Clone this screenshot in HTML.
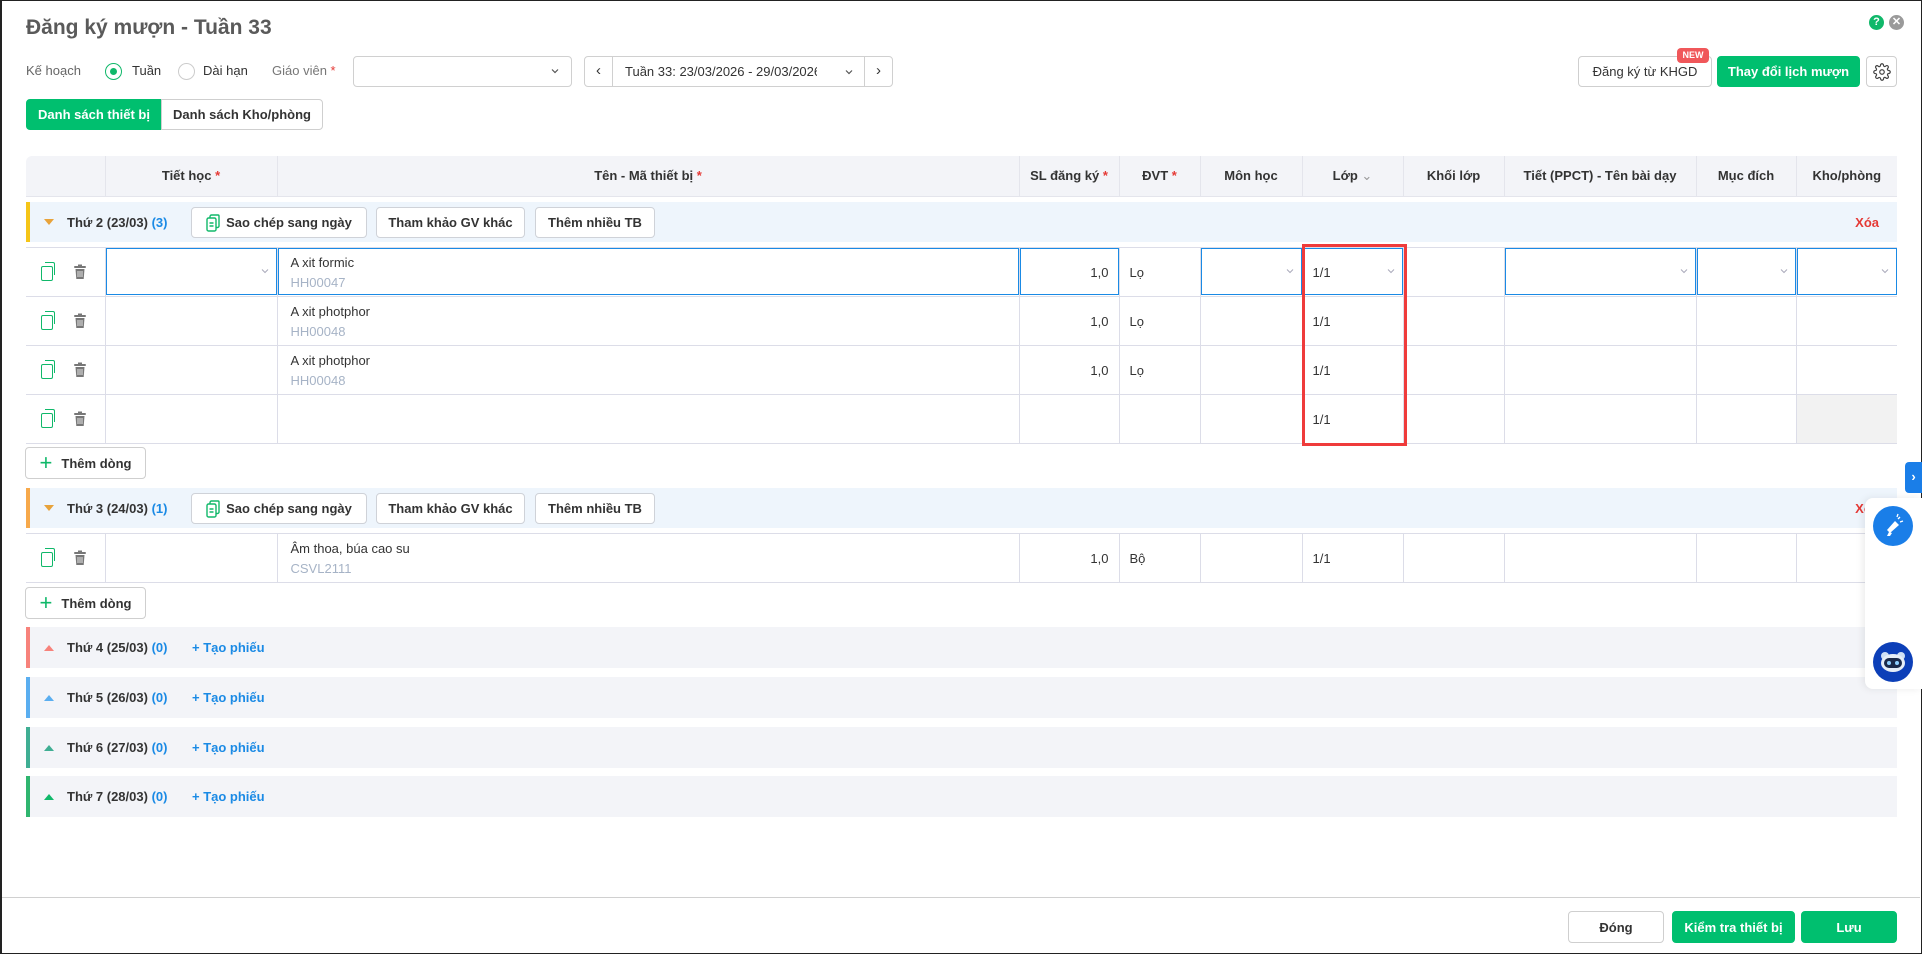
<!DOCTYPE html>
<html><head><meta charset="utf-8"><style>
*{box-sizing:border-box;margin:0;padding:0}
body{width:1922px;height:954px;overflow:hidden;background:#fff;font-family:"Liberation Sans",sans-serif;font-size:13px;color:#333;position:relative}
.frame{position:absolute;left:0;top:0;width:1922px;height:954px;border:1px solid #222;border-left-width:2px}
.abs{position:absolute}
.btn{position:absolute;border:1px solid #cfcfcf;border-radius:4px;background:#fff;display:flex;align-items:center;justify-content:center;font-size:13px;color:#333}
.g{background:#00bf6f;border-color:#00bf6f;color:#fff;font-weight:bold}
table{position:absolute;left:26px;border-collapse:collapse;table-layout:fixed;width:1871px}
td,th{border:1px solid #dcdde8;border-top:none;padding:0 10px;vertical-align:middle}
td:first-child,th:first-child{border-left:none}
td:last-child,th:last-child{border-right:none}
th{background:#f3f4f8;height:40px;font-weight:bold;font-size:13px;color:#333;border-color:#e4e5ec}
th:first-child{border-top-left-radius:6px}
td{height:49px;position:relative}
.req{color:#e53935}
.inp{position:absolute;left:0;top:0;right:0;bottom:1px;border:1px solid #1a8ae5;}
.chev{position:absolute;right:8px;top:50%;margin-top:-5px;width:8px;height:8px}
.nm{font-size:13px;color:#333;position:absolute;left:13px;top:7px}
.cd{font-size:13px;color:#a6b3c6;position:absolute;left:13px;top:27px}
.grp{position:absolute;left:26px;width:1871px;display:flex;align-items:center;font-size:13px;font-weight:bold;color:#333}
.bar{position:absolute;left:0;top:0;bottom:0;width:4px}
.tri{width:0;height:0;border-left:5px solid transparent;border-right:5px solid transparent;position:absolute;left:18px}
.gbtn{position:absolute;top:5px;height:31px;border:1px solid #cfd2d8;border-radius:4px;background:#fff;font-weight:bold;font-size:13px;display:flex;align-items:center;justify-content:center;color:#333}
.blue{color:#1a8ae5}
td.ic::before{content:"";position:absolute;left:15px;top:18px;width:10px;height:13px;border:1.5px solid #10b86a;border-radius:2px}
td.ic::after{content:"";position:absolute;left:19px;top:14px;width:9px;height:12px;border:1.5px solid #10b86a;border-left:none;border-bottom:none;border-radius:0 2px 0 0}
.tr{position:absolute;width:14px;height:16px}
</style></head><body>
<div class="frame"></div>
<div class="abs" style="left:26px;top:16px;font-size:21px;font-weight:bold;color:#5a5a5a">Đăng ký mượn - Tuần 33</div>
<div class="abs" style="left:1869px;top:15px;width:15px;height:15px;border-radius:50%;background:#10b86a;color:#fff;font-size:11px;font-weight:bold;text-align:center;line-height:15px">?</div>
<div class="abs" style="left:1889px;top:15px;width:15px;height:15px;border-radius:50%;background:#9a9a9a;color:#fff;font-size:11px;font-weight:bold;text-align:center;line-height:15px">✕</div>

<div class="abs" style="left:26px;top:63px;color:#666">Kế hoạch</div>
<div class="abs" style="left:105px;top:63px;width:17px;height:17px;border:1px solid #10b86a;border-radius:50%"><div style="margin:4px;width:7px;height:7px;border-radius:50%;background:#10b86a"></div></div>
<div class="abs" style="left:132px;top:63px;color:#333">Tuần</div>
<div class="abs" style="left:178px;top:63px;width:17px;height:17px;border:1px solid #ccc;border-radius:50%"></div>
<div class="abs" style="left:203px;top:63px;color:#333">Dài hạn</div>
<div class="abs" style="left:272px;top:63px;color:#777">Giáo viên <span class="req">*</span></div>
<div class="abs" style="left:353px;top:56px;width:219px;height:31px;border:1px solid #d0d0d0;border-radius:4px"><svg class="chev" style="right:12px" viewBox="0 0 8 8"><path d="M1 2.5L4 5.5L7 2.5" stroke="#555" fill="none" stroke-width="1.2"/></svg></div>
<div class="abs" style="left:584px;top:56px;width:309px;height:31px;border:1px solid #d0d0d0;border-radius:4px;overflow:hidden">
 <div class="abs" style="left:0;top:0;width:28px;height:29px;border-right:1px solid #d0d0d0;text-align:center;line-height:28px;font-size:15px">‹</div>
 <div class="abs" style="left:40px;top:7px;width:192px;overflow:hidden;white-space:nowrap">Tuần 33: 23/03/2026 - 29/03/2026</div>
 <svg class="abs" style="left:260px;top:11px;width:8px;height:8px" viewBox="0 0 8 8"><path d="M1 2.5L4 5.5L7 2.5" stroke="#555" fill="none" stroke-width="1.2"/></svg>
 <div class="abs" style="right:0;top:0;width:28px;height:29px;border-left:1px solid #d0d0d0;text-align:center;line-height:28px;font-size:15px">›</div>
</div>
<div class="btn" style="left:1578px;top:56px;width:134px;height:31px">Đăng ký từ KHGD</div>
<div class="abs" style="left:1677px;top:48px;width:32px;height:15px;background:#f0575a;border-radius:4px;color:#fff;font-size:9px;font-weight:bold;text-align:center;line-height:15px">NEW</div>
<div class="btn g" style="left:1717px;top:56px;width:143px;height:31px">Thay đổi lịch mượn</div>
<div class="btn" style="left:1866px;top:56px;width:31px;height:31px"><svg width="18" height="18" viewBox="0 0 24 24" fill="none" stroke="#444" stroke-width="1.6"><circle cx="12" cy="12" r="3"/><path d="M19.4 15a1.7 1.7 0 0 0 .3 1.8l.1.1a2 2 0 1 1-2.8 2.8l-.1-.1a1.7 1.7 0 0 0-1.8-.3 1.7 1.7 0 0 0-1 1.5V21a2 2 0 1 1-4 0v-.1a1.7 1.7 0 0 0-1.1-1.5 1.7 1.7 0 0 0-1.800.3l-.1.1a2 2 0 1 1-2.8-2.8l.1-.1a1.7 1.7 0 0 0 .3-1.8 1.7 1.7 0 0 0-1.5-1H3a2 2 0 1 1 0-4h.1a1.7 1.7 0 0 0 1.5-1.1 1.7 1.7 0 0 0-.3-1.8l-.1-.1a2 2 0 1 1 2.8-2.8l.1.1a1.7 1.7 0 0 0 1.8.3H9a1.7 1.7 0 0 0 1-1.5V3a2 2 0 1 1 4 0v.1a1.7 1.7 0 0 0 1 1.5 1.7 1.7 0 0 0 1.8-.3l.1-.1a2 2 0 1 1 2.8 2.8l-.1.1a1.7 1.7 0 0 0-.3 1.8V9a1.7 1.7 0 0 0 1.5 1H21a2 2 0 1 1 0 4h-.1a1.7 1.7 0 0 0-1.5 1z"/></svg></div>

<div class="btn g" style="left:26px;top:99px;width:136px;height:31px;border-radius:4px 0 0 4px">Danh sách thiết bị</div>
<div class="btn" style="left:161px;top:99px;width:162px;height:31px;border-radius:0 4px 4px 0;font-weight:bold">Danh sách Kho/phòng</div>

<table style="top:156px"><colgroup><col style="width:79px"><col style="width:172px"><col style="width:742px"><col style="width:100px"><col style="width:81px"><col style="width:102px"><col style="width:101px"><col style="width:101px"><col style="width:192px"><col style="width:100px"><col style="width:101px"></colgroup>
<tr><th></th><th>Tiết học <span class="req">*</span></th><th>Tên - Mã thiết bị <span class="req">*</span></th><th>SL đăng ký <span class="req">*</span></th><th>ĐVT <span class="req">*</span></th><th>Môn học</th><th>Lớp <span style="color:#999;font-weight:normal">⌄</span></th><th>Khối lớp</th><th>Tiết (PPCT) - Tên bài dạy</th><th>Mục đích</th><th>Kho/phòng</th></tr></table>

<div class="grp" style="top:202px;height:40px;background:#eef5fc"><div class="bar" style="background:#f5c518"></div><div class="tri" style="border-top:6px solid #e8a33a"></div>
<span style="position:absolute;left:41px">Thứ 2 (23/03) <span class="blue">(3)</span></span>
<div class="gbtn" style="left:165px;width:176px"><svg width="14" height="18" viewBox="0 0 14 18" style="margin-right:6px" fill="none" stroke="#10b86a" stroke-width="1.4"><rect x="1" y="4" width="9" height="13" rx="1.5"/><path d="M4 4V2.5A1.5 1.5 0 0 1 5.5 1H12a1 1 0 0 1 1 1v10a1.5 1.5 0 0 1-1.5 1.5H10"/><path d="M3.5 9h4M3.5 12h4"/></svg>Sao chép sang ngày</div>
<div class="gbtn" style="left:350px;width:149px">Tham khảo GV khác</div>
<div class="gbtn" style="left:509px;width:120px">Thêm nhiều TB</div>
<span style="position:absolute;right:18px;color:#e53935">Xóa</span></div>

<table style="top:247px;border-top:1px solid #dcdde8"><colgroup><col style="width:79px"><col style="width:172px"><col style="width:742px"><col style="width:100px"><col style="width:81px"><col style="width:102px"><col style="width:101px"><col style="width:101px"><col style="width:192px"><col style="width:100px"><col style="width:101px"></colgroup>
<tr><td class="ic"></td><td><div class="inp"></div><svg class="chev" viewBox="0 0 8 8"><path d="M1 2.5L4 5.5L7 2.5" stroke="#aab" fill="none"/></svg></td><td><div class="inp"></div><span class="nm">A xit formic</span><span class="cd">HH00047</span></td><td style="text-align:right"><div class="inp"></div><span style="position:relative">1,0</span></td><td>Lọ</td><td><div class="inp"></div><svg class="chev" viewBox="0 0 8 8"><path d="M1 2.5L4 5.5L7 2.5" stroke="#aab" fill="none"/></svg></td><td><div class="inp"></div><span style="position:relative">1/1</span><svg class="chev" viewBox="0 0 8 8"><path d="M1 2.5L4 5.5L7 2.5" stroke="#aab" fill="none"/></svg></td><td></td><td><div class="inp"></div><svg class="chev" viewBox="0 0 8 8"><path d="M1 2.5L4 5.5L7 2.5" stroke="#aab" fill="none"/></svg></td><td><div class="inp"></div><svg class="chev" viewBox="0 0 8 8"><path d="M1 2.5L4 5.5L7 2.5" stroke="#aab" fill="none"/></svg></td><td><div class="inp"></div><svg class="chev" viewBox="0 0 8 8"><path d="M1 2.5L4 5.5L7 2.5" stroke="#aab" fill="none"/></svg></td></tr>
<tr><td class="ic"></td><td></td><td><span class="nm">A xit photphor</span><span class="cd">HH00048</span></td><td style="text-align:right">1,0</td><td>Lọ</td><td></td><td>1/1</td><td></td><td></td><td></td><td></td></tr>
<tr><td class="ic"></td><td></td><td><span class="nm">A xit photphor</span><span class="cd">HH00048</span></td><td style="text-align:right">1,0</td><td>Lọ</td><td></td><td>1/1</td><td></td><td></td><td></td><td></td></tr>
<tr><td class="ic"></td><td></td><td></td><td></td><td></td><td></td><td>1/1</td><td></td><td></td><td></td><td style="background:#f2f2f2"></td></tr>
</table>
<div class="abs" style="left:1302px;top:244px;width:105px;height:202px;border:3px solid #ef3b3b"></div>

<div class="btn" style="left:25px;top:447px;width:121px;height:32px;font-weight:bold"><span style="color:#10b86a;font-size:22px;font-weight:normal;margin-right:9px;line-height:20px">+</span>Thêm dòng</div>

<div class="grp" style="top:488px;height:40px;background:#eef5fc"><div class="bar" style="background:#f7a94b"></div><div class="tri" style="border-top:6px solid #e8a33a"></div>
<span style="position:absolute;left:41px">Thứ 3 (24/03) <span class="blue">(1)</span></span>
<div class="gbtn" style="left:165px;width:176px"><svg width="14" height="18" viewBox="0 0 14 18" style="margin-right:6px" fill="none" stroke="#10b86a" stroke-width="1.4"><rect x="1" y="4" width="9" height="13" rx="1.5"/><path d="M4 4V2.5A1.5 1.5 0 0 1 5.5 1H12a1 1 0 0 1 1 1v10a1.5 1.5 0 0 1-1.5 1.5H10"/><path d="M3.5 9h4M3.5 12h4"/></svg>Sao chép sang ngày</div>
<div class="gbtn" style="left:350px;width:149px">Tham khảo GV khác</div>
<div class="gbtn" style="left:509px;width:120px">Thêm nhiều TB</div>
<span style="position:absolute;right:18px;color:#e53935">Xóa</span></div>

<table style="top:533px;border-top:1px solid #dcdde8"><colgroup><col style="width:79px"><col style="width:172px"><col style="width:742px"><col style="width:100px"><col style="width:81px"><col style="width:102px"><col style="width:101px"><col style="width:101px"><col style="width:192px"><col style="width:100px"><col style="width:101px"></colgroup>
<tr><td class="ic"></td><td></td><td><span class="nm">Âm thoa, búa cao su</span><span class="cd">CSVL2111</span></td><td style="text-align:right">1,0</td><td>Bộ</td><td></td><td>1/1</td><td></td><td></td><td></td><td></td></tr></table>

<div class="btn" style="left:25px;top:587px;width:121px;height:32px;font-weight:bold"><span style="color:#10b86a;font-size:22px;font-weight:normal;margin-right:9px;line-height:20px">+</span>Thêm dòng</div>

<div class="grp" style="top:627px;height:41px;background:#f3f4f8"><div class="bar" style="background:#f7827b"></div><div class="tri" style="border-bottom:6px solid #f7827b"></div><span style="position:absolute;left:41px">Thứ 4 (25/03) <span class="blue">(0)</span></span><span class="blue" style="position:absolute;left:166px">+ Tạo phiếu</span></div>
<div class="grp" style="top:677px;height:41px;background:#f3f4f8"><div class="bar" style="background:#5aaef0"></div><div class="tri" style="border-bottom:6px solid #5aaef0"></div><span style="position:absolute;left:41px">Thứ 5 (26/03) <span class="blue">(0)</span></span><span class="blue" style="position:absolute;left:166px">+ Tạo phiếu</span></div>
<div class="grp" style="top:727px;height:41px;background:#f3f4f8"><div class="bar" style="background:#3fae93"></div><div class="tri" style="border-bottom:6px solid #3fae93"></div><span style="position:absolute;left:41px">Thứ 6 (27/03) <span class="blue">(0)</span></span><span class="blue" style="position:absolute;left:166px">+ Tạo phiếu</span></div>
<div class="grp" style="top:776px;height:41px;background:#f3f4f8"><div class="bar" style="background:#2fb56f"></div><div class="tri" style="border-bottom:6px solid #10b86a"></div><span style="position:absolute;left:41px">Thứ 7 (28/03) <span class="blue">(0)</span></span><span class="blue" style="position:absolute;left:166px">+ Tạo phiếu</span></div>

<div class="abs" style="left:2px;top:897px;width:1918px;height:1px;background:#d0d0d0"></div>
<div class="btn" style="left:1568px;top:911px;width:96px;height:32px;font-weight:bold">Đóng</div>
<div class="btn g" style="left:1672px;top:911px;width:123px;height:32px">Kiểm tra thiết bị</div>
<div class="btn g" style="left:1801px;top:911px;width:96px;height:32px">Lưu</div>

<div class="abs" style="left:1865px;top:498px;width:57px;height:191px;background:#fff;border-radius:8px 0 0 8px;box-shadow:-2px 0 8px rgba(0,0,0,0.08)"></div>
<div class="abs" style="left:1905px;top:462px;width:17px;height:31px;background:#1a7ee8;border-radius:4px 0 0 4px;color:#fff;font-weight:bold;text-align:center;line-height:30px;font-size:13px">›</div>
<div class="abs" style="left:1873px;top:506px;width:40px;height:40px;border-radius:50%;background:#1a7ee8"><svg width="40" height="40" viewBox="0 0 40 40"><path d="M14 24l8-9 4 4-9 8z" fill="#fff"/><path d="M16 26l-2 4 3 0 2-3z" fill="#fff"/><path d="M25 13l2-2M27 16l3-1M24 11l1-3" stroke="#fff" stroke-width="1.3"/></svg></div>
<div class="abs" style="left:1873px;top:642px;width:40px;height:40px;border-radius:50%;background:#0c3fb8"><svg width="40" height="40" viewBox="0 0 40 40"><circle cx="12" cy="14" r="4" fill="#cfe0f5"/><circle cx="28" cy="14" r="4" fill="#cfe0f5"/><ellipse cx="20" cy="21" rx="12" ry="9" fill="#e6eef8"/><rect x="11" y="16" width="18" height="10" rx="5" fill="#1b2a4a"/><circle cx="16" cy="21" r="2" fill="#8fd0ff"/><circle cx="24" cy="21" r="2" fill="#8fd0ff"/></svg></div>

<svg class="tr" style="left:73px;top:264px" viewBox="0 0 14 16"><rect x="1" y="2" width="12" height="2" rx="1" fill="#777"/><rect x="5" y="0.5" width="4" height="2" fill="#777"/><path d="M2.5 5h9l-.8 10h-7.4z" fill="#777"/><path d="M5 7v6M7 7v6M9 7v6" stroke="#fff" stroke-width="0.8"/></svg>
<svg class="tr" style="left:73px;top:313px" viewBox="0 0 14 16"><rect x="1" y="2" width="12" height="2" rx="1" fill="#777"/><rect x="5" y="0.5" width="4" height="2" fill="#777"/><path d="M2.5 5h9l-.8 10h-7.4z" fill="#777"/><path d="M5 7v6M7 7v6M9 7v6" stroke="#fff" stroke-width="0.8"/></svg>
<svg class="tr" style="left:73px;top:362px" viewBox="0 0 14 16"><rect x="1" y="2" width="12" height="2" rx="1" fill="#777"/><rect x="5" y="0.5" width="4" height="2" fill="#777"/><path d="M2.5 5h9l-.8 10h-7.4z" fill="#777"/><path d="M5 7v6M7 7v6M9 7v6" stroke="#fff" stroke-width="0.8"/></svg>
<svg class="tr" style="left:73px;top:411px" viewBox="0 0 14 16"><rect x="1" y="2" width="12" height="2" rx="1" fill="#777"/><rect x="5" y="0.5" width="4" height="2" fill="#777"/><path d="M2.5 5h9l-.8 10h-7.4z" fill="#777"/><path d="M5 7v6M7 7v6M9 7v6" stroke="#fff" stroke-width="0.8"/></svg>
<svg class="tr" style="left:73px;top:550px" viewBox="0 0 14 16"><rect x="1" y="2" width="12" height="2" rx="1" fill="#777"/><rect x="5" y="0.5" width="4" height="2" fill="#777"/><path d="M2.5 5h9l-.8 10h-7.4z" fill="#777"/><path d="M5 7v6M7 7v6M9 7v6" stroke="#fff" stroke-width="0.8"/></svg>
</body></html>
